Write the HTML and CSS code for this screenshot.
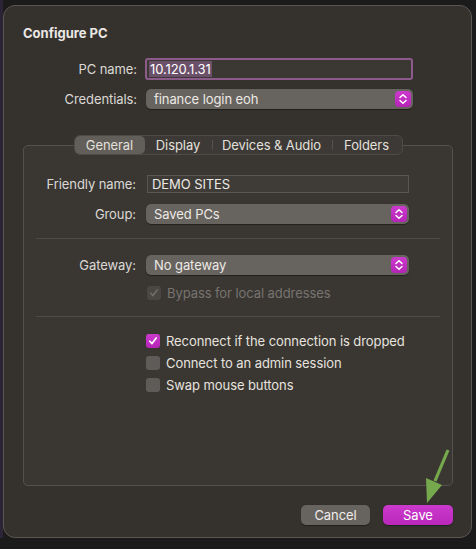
FILE: index.html
```html
<!DOCTYPE html>
<html>
<head>
<meta charset="utf-8">
<link rel="stylesheet" href="styles.css">
</head>
<body>
<div class="desk">
  <div class="dialog">
    <div class="title">Configure PC</div>
    <div class="top-form">
      <div class="label">PC name:</div>
      <div class="focus-field"><span class="sel">10.120.1.31</span></div>
      <div class="label">Credentials:</div>
      <div class="popup wide"><span>finance login eoh</span><span class="stepper"><svg width="10" height="12" viewBox="0 0 10 12"><path d="M2 4.5 L5 1.8 L8 4.5 M2 7.5 L5 10.2 L8 7.5" fill="none" stroke="#fff" stroke-width="1.5" stroke-linecap="round" stroke-linejoin="round"/></svg></span></div>
    </div>

    <div class="tabs-wrap">
      <div class="seg">
        <div class="tab active">General</div>
        <div class="tab">Display</div>
        <div class="tab sep">Devices &amp; Audio</div>
        <div class="tab sep">Folders</div>
      </div>
      <div class="box">
        <div class="form">
          <div class="label">Friendly name:</div>
          <div class="field">DEMO SITES</div>
          <div class="label">Group:</div>
          <div class="popup"><span>Saved PCs</span><span class="stepper"><svg width="10" height="12" viewBox="0 0 10 12"><path d="M2 4.5 L5 1.8 L8 4.5 M2 7.5 L5 10.2 L8 7.5" fill="none" stroke="#fff" stroke-width="1.5" stroke-linecap="round" stroke-linejoin="round"/></svg></span></div>
        </div>
        <div class="rule"></div>
        <div class="form gw">
          <div class="label">Gateway:</div>
          <div class="popup"><span>No gateway</span><span class="stepper"><svg width="10" height="12" viewBox="0 0 10 12"><path d="M2 4.5 L5 1.8 L8 4.5 M2 7.5 L5 10.2 L8 7.5" fill="none" stroke="#fff" stroke-width="1.5" stroke-linecap="round" stroke-linejoin="round"/></svg></span></div>
          <div></div>
          <div class="check disabled"><span class="box-ck"><svg width="10" height="10" viewBox="0 0 10 10"><path d="M1.8 5.2 L4 7.6 L8.2 2" fill="none" stroke="#6f6b67" stroke-width="1.7" stroke-linecap="round" stroke-linejoin="round"/></svg></span>Bypass for local addresses</div>
        </div>
        <div class="rule r2"></div>
        <div class="checks">
          <div class="check"><span class="box-ck on"><svg width="10" height="10" viewBox="0 0 10 10"><path d="M1.8 5.2 L4 7.6 L8.2 2" fill="none" stroke="#fff" stroke-width="1.7" stroke-linecap="round" stroke-linejoin="round"/></svg></span>Reconnect if the connection is dropped</div>
          <div class="check"><span class="box-ck"></span>Connect to an admin session</div>
          <div class="check"><span class="box-ck"></span>Swap mouse buttons</div>
        </div>
      </div>
    </div>

    <div class="buttons">
      <div class="btn cancel">Cancel</div>
      <div class="btn save">Save</div>
    </div>

    <svg class="arrow" width="40" height="60" viewBox="0 0 40 60">
      <path d="M33 1 L20 32" stroke="#76a84e" stroke-width="3.2" fill="none"/>
      <path d="M11 29 L27 36 L12 54 Z" fill="#76a84e"/>
    </svg>
  </div>
</div>
</body>
</html>
```

FILE: styles.css
```css
html, body {
  margin: 0;
  padding: 0;
}
body {
  background: #1c1b1b;
  font-family: Inter, "Noto Sans", sans-serif;
  font-size: 13px;
  letter-spacing: -0.08px;
  color: #dedbd7;
  width: 476px;
  height: 549px;
  overflow: hidden;
}
.desk {
  padding: 5px 4px 0 3px;
  background: linear-gradient(to right, #2a2436 0, #2a2436 3px, transparent 3px);
}
.dialog {
  position: relative;
  width: 469px;
  height: 533px;
  box-sizing: border-box;
  border: 1px solid #5a5652;
  border-radius: 12px;
  background: #35322e;
  padding: 19px 18px 0 19px;
  display: flex;
  flex-direction: column;
}
.title {
  font-weight: 700;
  font-size: 13px;
  line-height: 16px;
  color: #ebe8e4;
  letter-spacing: 0;
}
.top-form {
  margin-top: 17px;
  display: grid;
  grid-template-columns: 114px 268px;
  column-gap: 8px;
  row-gap: 9px;
  align-items: center;
}
.label {
  text-align: right;
  color: #dcd9d5;
  line-height: 16px;
}
.focus-field {
  height: 22px;
  box-sizing: border-box;
  border: 2.5px solid #8c5a8b;
  border-radius: 3px;
  background: #3b3834;
  padding: 0 2px;
  display: flex;
  align-items: center;
  color: #fff;
}
.sel {
  background: #6b5069;
  line-height: 16px;
  padding: 0 1px;
}
.popup {
  height: 20px;
  box-sizing: border-box;
  background: #67635f;
  border-radius: 5px;
  box-shadow: 0 0.5px 1px rgba(0,0,0,0.4);
  display: flex;
  align-items: center;
  justify-content: space-between;
  padding: 0 2px 0 8px;
  color: #ece9e5;
}
.popup.wide {
  margin-left: 1px;
}
.stepper {
  width: 16px;
  height: 16px;
  border-radius: 4px;
  background: linear-gradient(#cc3acd, #b524b7);
  display: flex;
  align-items: center;
  justify-content: center;
}
.tabs-wrap {
  margin-top: 26px;
  display: flex;
  flex-direction: column;
  align-items: center;
}
.seg {
  position: relative;
  z-index: 1;
  display: flex;
  height: 20px;
  box-sizing: border-box;
  border: 1px solid #4e4a47;
  border-radius: 6px;
  background: #3c3936;
  margin-bottom: -10px;
}
.tab {
  line-height: 18px;
  color: #e3e0dc;
  position: relative;
  box-sizing: border-box;
  text-align: center;
  padding: 0;
}
.tab.active {
  background: #625e5a;
  border-radius: 5px;
  width: 70px;
}
.tab:nth-child(2) { width: 67px; }
.tab:nth-child(3) { width: 120px; }
.tab:nth-child(4) { width: 70px; }
.tab.sep::before {
  content: "";
  position: absolute;
  left: 0;
  top: 4px;
  height: 10px;
  width: 1px;
  background: #55514e;
}
.box {
  align-self: stretch;
  height: 341px;
  box-sizing: border-box;
  border: 1px solid #55514d;
  border-radius: 5px;
  background: #3a3733;
  padding: 29px 12px 0 12px;
}
.form {
  display: grid;
  grid-template-columns: 100px 263px;
  column-gap: 10px;
  row-gap: 11px;
  align-items: center;
}
.field {
  height: 18px;
  box-sizing: border-box;
  margin-left: 1px;
  border: 1px solid #5a5653;
  background: #3f3c38;
  padding: 0 4px;
  line-height: 16px;
  color: #ece9e5;
}
.rule {
  height: 1px;
  background: #4f4b48;
  margin-top: 14px;
}
.form.gw {
  margin-top: 16px;
  row-gap: 10px;
}
.rule.r2 {
  margin-top: 15px;
}
.check {
  display: flex;
  align-items: center;
  gap: 6px;
  line-height: 16px;
  color: #e6e3df;
}
.check.disabled {
  color: #77736f;
  margin-left: 1px;
}
.box-ck {
  width: 14px;
  height: 14px;
  box-sizing: border-box;
  border-radius: 3px;
  background: #5f5b58;
  display: flex;
  align-items: center;
  justify-content: center;
  flex: none;
}
.check.disabled .box-ck {
  background: #4a4643;
}
.box-ck.on {
  background: linear-gradient(#cc3acd, #b524b7);
}
.checks {
  margin-top: 16px;
  padding-left: 110px;
  display: flex;
  flex-direction: column;
  gap: 6px;
}
.buttons {
  margin-top: 19px;
  display: flex;
  justify-content: flex-end;
  gap: 13px;
}
.btn {
  height: 20px;
  line-height: 20px;
  border-radius: 5px;
  text-align: center;
  color: #f0edea;
  box-shadow: 0 0.5px 1px rgba(0,0,0,0.4);
}
.cancel {
  width: 69px;
  background: #67635f;
}
.save {
  width: 70px;
  background: linear-gradient(#cc3acd, #b928bb);
  color: #fff;
}
.arrow {
  position: absolute;
  left: 411px;
  top: 443px;
}
```
